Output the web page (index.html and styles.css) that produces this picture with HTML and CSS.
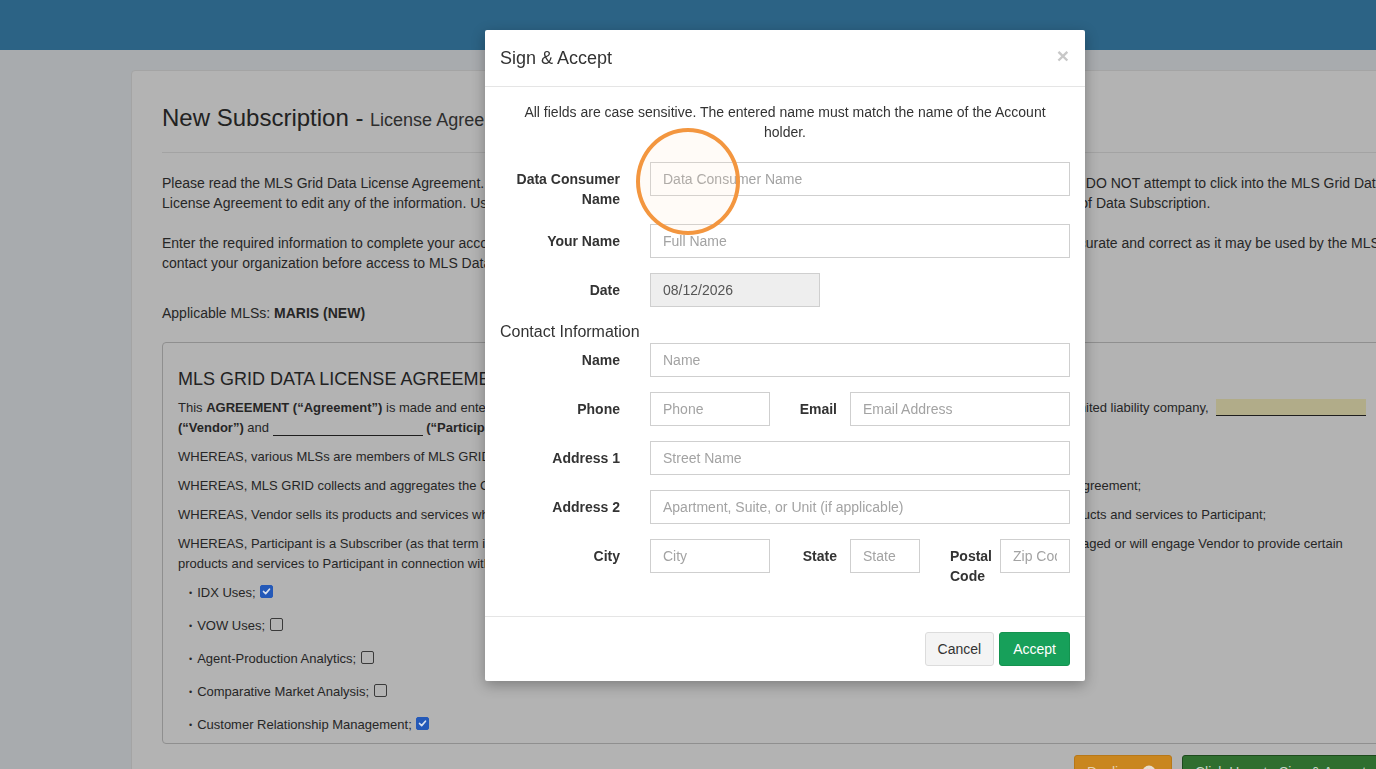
FILE: index.html
```html
<!DOCTYPE html>
<html>
<head>
<meta charset="utf-8">
<title>New Subscription - License Agreement</title>
<link rel="stylesheet" href="styles.css">
</head>
<body>
<div class="topbar"></div>
<div class="page">
  <div class="card">
    <h1 class="title">New Subscription - <small>License Agreement</small></h1>
    <div class="intro">
      <p>Please read the MLS Grid Data License Agreement. Check the box next to each type of data use that applies and then click the button at the bottom. DO NOT attempt to click into the MLS Grid Data<br>License Agreement to edit any of the information. Use the Sign &amp; Accept button at the bottom of this page to sign, accept, and complete the process of Data Subscription.</p>
      <p>Enter the required information to complete your account subscription. Please be sure that all of the contact information you have entered below is accurate and correct as it may be used by the MLS to<br>contact your organization before access to MLS Data is granted.</p>
      <p class="mls">Applicable MLSs: <b>MARIS (NEW)</b></p>
    </div>
    <div class="agreement">
      <h3>MLS GRID DATA LICENSE AGREEMENT</h3>
      <p>This <b>AGREEMENT (“Agreement”)</b> is made and entered into effective as of the date last fully executed below by and between MLS Grid, LLC, a Delaware limited liability company,&nbsp; <span class="blank fill"></span><br><b>(“Vendor”)</b> and <span class="blank"></span> <b>(“Participant”)</b>.</p>
      <p>WHEREAS, various MLSs are members of MLS GRID and have authorized MLS GRID to license their data;</p>
      <p>WHEREAS, MLS GRID collects and aggregates the Content (as defined below) from all the participating MLSs for licensing and distribution pursuant to this Agreement;</p>
      <p>WHEREAS, Vendor sells its products and services which make use of the real estate Content (as defined below) and Vendor desires to provide all those products and services to Participant;</p>
      <p>WHEREAS, Participant is a Subscriber (as that term is defined below) of one or more of the participating MLSs, and as such the Participant currently has engaged or will engage Vendor to provide certain<br>products and services to Participant in connection with the Participant's real estate business; and</p>
      <ul class="uses">
        <li>IDX Uses; <span class="cb on"><svg viewBox="0 0 13 13"><polyline points="3,6.5 5.5,9 10,3.8"/></svg></span></li>
        <li>VOW Uses; <span class="cb"></span></li>
        <li>Agent-Production Analytics; <span class="cb"></span></li>
        <li>Comparative Market Analysis; <span class="cb"></span></li>
        <li>Customer Relationship Management; <span class="cb on"><svg viewBox="0 0 13 13"><polyline points="3,6.5 5.5,9 10,3.8"/></svg></span></li>
      </ul>
    </div>
    <div class="actions">
      <span class="btn decline">Decline <svg class="xi" viewBox="0 0 14 14"><circle cx="7" cy="7" r="6.5"/><path d="M4.5 4.5 L9.5 9.5 M9.5 4.5 L4.5 9.5"/></svg></span>
      <span class="btn sign">Click Here to Sign &amp; Accept</span>
    </div>
  </div>
</div>

<div class="modal">
  <div class="mh">
    <h4>Sign &amp; Accept</h4>
    <span class="close">×</span>
  </div>
  <div class="mb">
    <p class="note">All fields are case sensitive. The entered name must match the name of the Account holder.</p>
    <div class="frow">
      <label class="flabel">Data Consumer Name</label>
      <input class="in" type="text" placeholder="Data Consumer Name">
    </div>
    <div class="frow">
      <label class="flabel">Your Name</label>
      <input class="in" type="text" placeholder="Full Name">
    </div>
    <div class="frow">
      <label class="flabel">Date</label>
      <input class="in date" type="text" value="08/12/2026" readonly>
    </div>
    <div class="section">Contact Information</div>
    <div class="frow">
      <label class="flabel">Name</label>
      <input class="in" type="text" placeholder="Name">
    </div>
    <div class="frow">
      <label class="flabel">Phone</label>
      <input class="in w120" type="text" placeholder="Phone">
      <label class="flabel2">Email</label>
      <input class="in" type="text" placeholder="Email Address">
    </div>
    <div class="frow">
      <label class="flabel">Address 1</label>
      <input class="in" type="text" placeholder="Street Name">
    </div>
    <div class="frow">
      <label class="flabel">Address 2</label>
      <input class="in" type="text" placeholder="Apartment, Suite, or Unit (if applicable)">
    </div>
    <div class="frow">
      <label class="flabel">City</label>
      <input class="in w120" type="text" placeholder="City">
      <label class="flabel2">State</label>
      <input class="in w70" type="text" placeholder="State">
      <label class="flabel3">Postal Code</label>
      <input class="in w70" type="text" placeholder="Zip Code">
    </div>
  </div>
  <div class="mf">
    <span class="mbtn cancel">Cancel</span>
    <span class="mbtn accept">Accept</span>
  </div>
</div>

<div class="ring"></div>
</body>
</html>
```

FILE: styles.css
```css
* { box-sizing: border-box; }

html, body {
  margin: 0;
  width: 1376px;
  height: 769px;
  overflow: hidden;
}

body {
  background: #a8abae;
  font-family: "Liberation Sans", Arial, Helvetica, sans-serif;
  font-size: 14px;
  color: #262626;
}

.topbar {
  height: 50px;
  background: #2c6385;
}

.page {
  padding: 20px 0 0 131px;
}

.card {
  width: 1420px;
  height: 760px;
  background: #b3b3b3;
  border: 1px solid #a4a4a4;
  border-radius: 4px;
  padding: 0 30px;
}

.title {
  margin: 34px 0 0;
  font-size: 24px;
  font-weight: normal;
  line-height: 26px;
  padding-bottom: 21px;
  border-bottom: 1px solid #a3a3a3;
  color: #222;
}

.title small {
  font-size: 18px;
  line-height: 1;
  color: #2e2e2e;
}

.intro p {
  margin: 20px 0 0;
  line-height: 20px;
  white-space: nowrap;
}

.intro p.mls {
  margin-top: 30px;
}

.agreement {
  margin-top: 19px;
  border: 1px solid #8f8f8f;
  border-radius: 4px;
  padding: 6px 16px 8px 15px;
  font-size: 13px;
}

.agreement h3 {
  margin: 20px 0 9px;
  font-size: 18px;
  font-weight: normal;
  line-height: 20px;
  color: #222;
}

.agreement p {
  margin: 0 0 9px;
  line-height: 20px;
  white-space: nowrap;
}

.blank {
  display: inline-block;
  width: 150px;
  height: 17px;
  border-bottom: 1px solid #1e1e1e;
  vertical-align: -4px;
}

.blank.fill {
  background: #b1ac89;
}

.uses {
  list-style: none;
  margin: 3px 0 0;
  padding: 0 0 0 11px;
}

.uses li {
  height: 20px;
  line-height: 20px;
  margin-bottom: 13px;
  white-space: nowrap;
}

.uses li:last-child {
  margin-bottom: 0;
}

.uses li::before {
  content: "•";
  font-size: 9px;
  margin-right: 5px;
  vertical-align: 1px;
}

.cb {
  display: inline-block;
  width: 13px;
  height: 13px;
  border: 1px solid #3a3a3a;
  border-radius: 2px;
  vertical-align: -1px;
  margin-left: 1px;
}

.cb.on {
  background: #2459b8;
  border-color: #2459b8;
}

.cb svg {
  display: block;
  width: 11px;
  height: 11px;
}

.cb polyline {
  fill: none;
  stroke: #d9e1ee;
  stroke-width: 2;
  stroke-linecap: round;
  stroke-linejoin: round;
}

.actions {
  display: flex;
  gap: 10px;
  margin-top: 11px;
  padding-left: 912px;
}

.btn {
  display: inline-flex;
  align-items: center;
  height: 34px;
  padding: 0 12px;
  border-radius: 3px;
  border: 1px solid transparent;
  font-size: 14px;
  white-space: nowrap;
}

.decline {
  width: 98px;
  background: #c9861f;
  border-color: #b87818;
  color: #e6d3b2;
  gap: 8px;
}

.xi {
  width: 14px;
  height: 14px;
}

.xi circle {
  fill: #e6ddd0;
}

.xi path {
  stroke: #c9861f;
  stroke-width: 2;
}

.sign {
  width: 240px;
  background: #2f6e2f;
  border-color: #1d4a1d;
  color: #c6d6c6;
}

/* Modal */
.modal {
  position: fixed;
  left: 485px;
  top: 30px;
  width: 600px;
  background: #fff;
  border-radius: 2px;
  box-shadow: 0 4px 14px rgba(0, 0, 0, 0.3);
  color: #333;
}

.mh {
  display: flex;
  justify-content: space-between;
  align-items: center;
  padding: 15px;
  border-bottom: 1px solid #e5e5e5;
}

.mh h4 {
  margin: 0;
  font-size: 18px;
  font-weight: normal;
  line-height: 26px;
  color: #333;
}

.close {
  font-size: 21px;
  font-weight: bold;
  line-height: 1;
  color: #c8c8c8;
  margin-top: -6px;
  margin-right: 1px;
}

.mb {
  padding: 15px;
}

.note {
  max-width: 540px;
  margin: 0 auto 20px;
  text-align: center;
  line-height: 20px;
}

.frow {
  display: flex;
  align-items: flex-start;
  margin-bottom: 15px;
}

.flabel {
  flex: 0 0 120px;
  margin-right: 30px;
  padding-top: 7px;
  line-height: 20px;
  text-align: right;
  font-weight: bold;
}

.flabel2 {
  flex: 0 0 67px;
  margin-right: 13px;
  padding-top: 7px;
  line-height: 20px;
  text-align: right;
  font-weight: bold;
}

.flabel3 {
  flex: 0 0 50px;
  margin-left: 30px;
  padding-top: 7px;
  line-height: 20px;
  text-align: left;
  font-weight: bold;
}

.in {
  flex: 1 1 auto;
  min-width: 0;
  height: 34px;
  padding: 6px 12px;
  border: 1px solid #cfcfcf;
  border-radius: 0;
  font-family: inherit;
  font-size: 14px;
  color: #555;
  background: #fff;
  outline: none;
}

.in::placeholder {
  color: #a3a3a3;
}

.in.date {
  flex: 0 0 170px;
  background: #eeeeee;
  color: #555;
}

.in.w120 {
  flex: 0 0 120px;
}

.in.w70 {
  flex: 0 0 70px;
}

.section {
  font-size: 16px;
  line-height: 20px;
  margin-bottom: 1px;
  color: #333;
}

.mf {
  display: flex;
  justify-content: flex-end;
  gap: 5px;
  padding: 15px;
  border-top: 1px solid #e5e5e5;
}

.mbtn {
  display: inline-flex;
  align-items: center;
  height: 34px;
  padding: 0 12px;
  border-radius: 3px;
  border: 1px solid;
  font-size: 14px;
}

.cancel {
  background: #f4f4f4;
  border-color: #dcdcdc;
  color: #333;
}

.accept {
  padding: 0 13px;
  background: #17a05a;
  border-color: #14934f;
  color: #fff;
}

/* Highlight ring */
.ring {
  position: fixed;
  left: 636px;
  top: 128px;
  width: 104px;
  height: 107px;
  border: 4px solid #f3963f;
  border-radius: 50%;
  background: rgba(255, 228, 200, 0.14);
}
```
